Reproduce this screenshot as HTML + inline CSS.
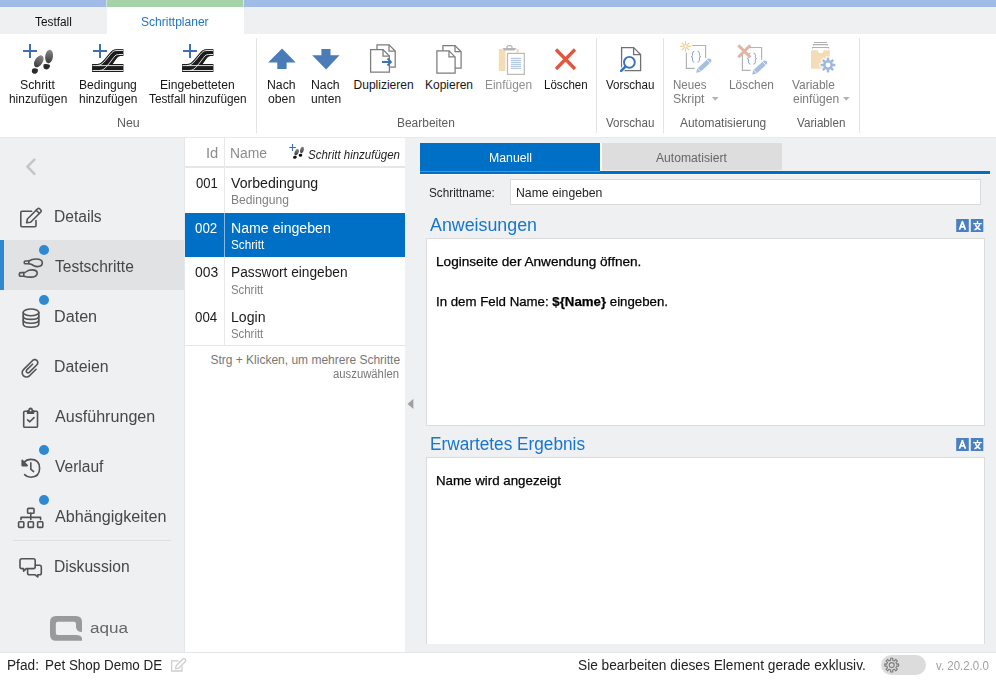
<!DOCTYPE html>
<html><head><meta charset="utf-8"><title>Schrittplaner</title>
<style>
html,body{margin:0;padding:0;width:996px;height:680px;overflow:hidden;background:#fff;}
body{position:relative;font-family:"Liberation Sans", sans-serif;}
.r{position:absolute;}
.t{position:absolute;white-space:nowrap;transform-origin:0 0;font-family:"Liberation Sans", sans-serif;}
svg.i{position:absolute;overflow:visible;}
</style></head><body>
<!-- top tab strip -->
<div class="r" style="left:0;top:0;width:106px;height:7px;background:#9fbbe6"></div>
<div class="r" style="left:106px;top:0;width:1px;height:7px;background:#d2e0e6"></div>
<div class="r" style="left:107px;top:0;width:136px;height:7px;background:#a6d2a8"></div>
<div class="r" style="left:243px;top:0;width:1px;height:7px;background:#d8e6dc"></div>
<div class="r" style="left:244px;top:0;width:752px;height:7px;background:#9fbbe6"></div>
<div class="r" style="left:0;top:7px;width:107px;height:27px;background:#eff0f2"></div>
<div class="r" style="left:244px;top:7px;width:752px;height:27px;background:#eff0f2"></div>
<!-- ribbon separators -->
<div class="r" style="left:256px;top:38px;width:1px;height:95px;background:#e3e3e3"></div>
<div class="r" style="left:596px;top:38px;width:1px;height:95px;background:#e3e3e3"></div>
<div class="r" style="left:663px;top:38px;width:1px;height:95px;background:#e3e3e3"></div>
<div class="r" style="left:859px;top:38px;width:1px;height:95px;background:#e3e3e3"></div>
<div class="r" style="left:0;top:137px;width:996px;height:1px;background:#eaeaea"></div>
<!-- sidebar -->
<div class="r" style="left:0;top:138px;width:185px;height:514px;background:#eff0f2"></div>
<div class="r" style="left:0;top:240px;width:185px;height:50px;background:#e1e2e3"></div>
<div class="r" style="left:0;top:240px;width:4px;height:50px;background:#2f89d2"></div>
<div class="r" style="left:13px;top:540px;width:158px;height:1px;background:#dfe0e2"></div>
<div class="r" style="left:39px;top:245px;width:10px;height:10px;border-radius:50%;background:#2e88d2"></div>
<div class="r" style="left:39px;top:295px;width:10px;height:10px;border-radius:50%;background:#2e88d2"></div>
<div class="r" style="left:39px;top:445px;width:10px;height:10px;border-radius:50%;background:#2e88d2"></div>
<div class="r" style="left:39px;top:495px;width:10px;height:10px;border-radius:50%;background:#2e88d2"></div>
<div class="r" style="left:184px;top:138px;width:1px;height:514px;background:#e6e7e9"></div>
<!-- list panel -->
<div class="r" style="left:185px;top:138px;width:220px;height:514px;background:#ffffff"></div>
<div class="r" style="left:185px;top:166px;width:220px;height:2px;background:#e6e6e6"></div>
<div class="r" style="left:224px;top:138px;width:1px;height:208px;background:#e8e8e8"></div>
<div class="r" style="left:185px;top:213px;width:220px;height:44px;background:#0070c6"></div>
<div class="r" style="left:224px;top:213px;width:1px;height:44px;background:#8ab8e4"></div>
<div class="r" style="left:185px;top:345px;width:220px;height:1px;background:#e6e6e6"></div>
<!-- right panel -->
<div class="r" style="left:405px;top:138px;width:591px;height:514px;background:#eff0f2"></div>
<div class="r" style="left:420px;top:143px;width:180px;height:28px;background:#0070c6"></div>
<div class="r" style="left:602px;top:143px;width:180px;height:27px;background:#dddddd"></div>
<div class="r" style="left:420px;top:171px;width:570px;height:3px;background:#0070c6"></div>
<div class="r" style="left:420px;top:171px;width:180px;height:1px;background:#4a93d6"></div>
<div class="r" style="left:602px;top:170px;width:180px;height:1px;background:#f2efea"></div>
<div class="r" style="left:600px;top:143px;width:2px;height:28px;background:#fbfbfa"></div>
<div class="r" style="left:420px;top:174px;width:570px;height:1px;background:#fbfaf7"></div>
<div class="r" style="left:510px;top:179px;width:469px;height:24px;background:#fff;border:1px solid #dadada"></div>
<div class="r" style="left:426px;top:238px;width:557px;height:186px;background:#fff;border:1px solid #dcdcdc"></div>
<div class="r" style="left:426px;top:457px;width:557px;height:195px;background:#fff;border:1px solid #dcdcdc;border-bottom:none"></div>
<div class="r" style="left:405px;top:644px;width:591px;height:8px;background:#eff0f2"></div>
<!-- footer -->
<div class="r" style="left:0;top:652px;width:996px;height:1px;background:#e6e6e6"></div>
<div class="r" style="left:881px;top:655px;width:45px;height:20px;border-radius:10px;background:#dcdcdc"></div>
<svg class="i" style="left:0;top:0" width="996" height="680" viewBox="0 0 996 680">
<defs>
<filter id="sh" x="-20%" y="-20%" width="140%" height="140%"><feGaussianBlur in="SourceAlpha" stdDeviation="0.7"/><feOffset dy="0.4"/><feComponentTransfer><feFuncA type="linear" slope="0.6"/></feComponentTransfer><feMerge><feMergeNode/><feMergeNode in="SourceGraphic"/></feMerge></filter>
<linearGradient id="gf" x1="0" y1="0" x2="0" y2="1"><stop offset="0" stop-color="#8a8a8a"/><stop offset="1" stop-color="#3a3a3a"/></linearGradient>
</defs>
<!-- Schritt hinzufuegen -->
<g stroke="#3d70b0" stroke-width="2" fill="none"><path d="M23 51H37M30 44V58"/></g>
<g fill="url(#gf)">
<ellipse cx="38.8" cy="61.3" rx="3.9" ry="6.6" transform="rotate(32 38.8 61.3)"/>
<ellipse cx="49.1" cy="56.4" rx="3.9" ry="6.8" transform="rotate(8 49.1 56.4)"/>
</g>
<g fill="#2a2a2a">
<path d="M32 69.5Q34 67.3 37.8 69.2Q38.5 72.5 35.5 73.8Q32 73.8 31.8 71.5Z"/>
<path d="M43.6 64.2Q47 63.5 50 65Q50 68.5 47 69.5Q43.8 69.5 43.4 67Z"/>
</g>
<!-- Bedingung hinzufuegen -->
<g id="trk">
<g stroke="#3d70b0" stroke-width="2" fill="none"><path d="M93 51H107M100 44V58"/></g>
<g filter="url(#sh)">
<path d="M92.1 64.1H97.2C100.3 64.1 102 62.3 104.6 59.2L109.6 53.2C111.8 50.4 113.5 49.2 117 49.2H123.3V56H120.5C118.5 56 117.8 57 116.5 58.5L112.6 63.9H123.3V72H92.1Z" fill="#1c1c1c"/>
</g>
<g stroke="#f4f4f4" stroke-width="0.9" fill="none">
<path d="M92.5 65.6H123M92.5 70.5H123"/>
<path d="M96.5 65.6C100.5 65.6 102.8 63.5 105.3 60.5L110.3 54.5C112.3 52 113.5 50.5 117 50.5H123"/>
<path d="M99.5 70.5C103 70.5 105 68.5 107.5 65.5L112.5 59C114.5 56.5 115.3 54.5 118.5 54.5H123"/>
</g>
</g>
<use href="#trk" x="90" y="0"/>
<!-- Nach oben / unten -->
<path d="M282.1 48.6L295.7 62.6H286.6V68.9H277.3V62.6H268.1Z" fill="#4a7cb8"/>
<path d="M321.4 49H330.5V55.2H339.5L326.1 69.4L312.2 55.2H321.4Z" fill="#4a7cb8"/>
<!-- Duplizieren -->
<g stroke="#7c7c7c" stroke-width="1.25" fill="#fff" stroke-linejoin="miter">
<path d="M377 44.8H389L395.2 51V67H377Z"/><path d="M389 44.8V51H395.2" fill="none"/>
<path d="M370.6 49.6H383L389.4 56V72H370.6Z"/><path d="M383 49.6V56H389.4" fill="none"/>
</g>
<g stroke="#3a74ba" stroke-width="1.8" fill="none"><path d="M382 62H391M387.5 58.5L391 62L387.5 65.5"/></g>
<!-- Kopieren -->
<g stroke="#7c7c7c" stroke-width="1.25" fill="#fff">
<path d="M442.9 45.6H455L461.1 51.7V68.2H442.9Z"/><path d="M455 45.6V51.7H461.1" fill="none"/>
<path d="M436.9 50.8H449L455.1 56.9V73H436.9Z"/><path d="M449 50.8V56.9H455.1" fill="none"/>
</g>
<!-- Einfuegen disabled -->
<path d="M498.8 49H505.5V71H498.8Z" fill="#f4ddb6"/><path d="M516.3 49H518.7V52.6H516.3Z" fill="#f4ddb6"/>
<path d="M502.5 48H516.5L514.5 50.6H504.5Z" fill="#b5b5b5"/>
<path d="M507 48.2V47Q507 45.6 509.5 45.6Q512 45.6 512 47V48.2" fill="none" stroke="#b5b5b5" stroke-width="1.2"/>
<rect x="507.5" y="53.4" width="16.8" height="21" fill="#fff" stroke="#b9b9b9" stroke-width="1.2"/>
<g stroke="#9db7d9" stroke-width="0.9"><path d="M511 58.3H521M511 60.3H521M511 62.3H521M511 64.3H521M511 66.3H521M511 68.3H521"/></g>
<!-- Loeschen -->
<g stroke="#e0563f" stroke-width="3.3" stroke-linecap="butt"><path d="M556 49.5L575 69M575 49.5L556 69"/></g>
<!-- Vorschau -->
<g stroke="#707070" stroke-width="1.3" fill="#fff">
<path d="M621.6 47.6H633.6L640.6 54.6V70.6H621.6Z"/><path d="M633.6 47.6V54.6H640.6" fill="none"/>
</g>
<circle cx="629.4" cy="62.3" r="7.4" fill="#fff"/>
<path d="M625.4 66.6L620.6 71.4" stroke="#fff" stroke-width="4.4" stroke-linecap="round"/>
<circle cx="629.4" cy="62.3" r="5.4" fill="#fff" stroke="#3a73b8" stroke-width="1.9"/>
<path d="M625.4 66.6L621.2 70.8" stroke="#3a73b8" stroke-width="2.6" stroke-linecap="round"/>
<!-- Neues Skript disabled -->
<path d="M692.2 45.5H705.6V57.8M686.4 52.8V68.4H694.7" stroke="#b3b3b3" stroke-width="1.2" fill="none"/><path d="M694.4 51.2Q692.5 51.2 692.5 53.2V55.5Q692.5 56.7 691.1 56.7Q692.5 56.7 692.5 57.900000000000006V60.2Q692.5 62.2 694.4 62.2M697.5000000000001 51.2Q699.4000000000001 51.2 699.4000000000001 53.2V55.5Q699.4000000000001 56.7 700.8000000000001 56.7Q699.4000000000001 56.7 699.4000000000001 57.900000000000006V60.2Q699.4000000000001 62.2 697.5000000000001 62.2" stroke="#8aabd6" stroke-width="1" fill="none"/><path d="M696.10 72.80 L700.30 72.04 L710.67 62.45 L711.20 61.72 L711.41 60.85 L711.27 59.96 L710.80 59.20 L710.07 58.67 L709.20 58.46 L708.31 58.60 L707.55 59.07 L697.18 68.67Z" fill="#a5bfe1"/><path d="M700.95 71.86L697.42 68.04M710.22 63.28L706.69 59.46" stroke="#fff" stroke-width="0.8"/><path d="M687.40 46.40L690.80 46.40M686.84 47.74L689.25 50.15M685.50 48.30L685.50 51.70M684.16 47.74L681.75 50.15M683.60 46.40L680.20 46.40M684.16 45.06L681.75 42.65M685.50 44.50L685.50 41.10M686.84 45.06L689.25 42.65" stroke="#f1cd92" stroke-width="1.1"/><circle cx="685.5" cy="46.4" r="1.7" fill="#fff" stroke="#f1cd92" stroke-width="1"/>
<!-- Loeschen skript disabled -->
<path d="M748.2 47.5H761.6V59.8M742.4 54.8V70.4H750.7" stroke="#b3b3b3" stroke-width="1.2" fill="none"/><path d="M750.4 53.1Q748.5 53.1 748.5 55.1V57.4Q748.5 58.6 747.1 58.6Q748.5 58.6 748.5 59.800000000000004V62.099999999999994Q748.5 64.1 750.4 64.1M753.5000000000001 53.1Q755.4000000000001 53.1 755.4000000000001 55.1V57.4Q755.4000000000001 58.6 756.8000000000001 58.6Q755.4000000000001 58.6 755.4000000000001 59.800000000000004V62.099999999999994Q755.4000000000001 64.1 753.5000000000001 64.1" stroke="#8aabd6" stroke-width="1" fill="none"/><path d="M738.3 45.2L750.3 57.2M750.3 45.2L738.3 57.2" stroke="#e3b4a4" stroke-width="3"/><path d="M752.10 74.50 L756.31 73.76 L766.46 64.45 L766.99 63.73 L767.20 62.85 L767.07 61.97 L766.60 61.20 L765.88 60.67 L765.00 60.46 L764.12 60.59 L763.35 61.06 L753.20 70.37Z" fill="#a5bfe1"/><path d="M756.95 73.58L753.44 69.74M766.00 65.28L762.48 61.45" stroke="#fff" stroke-width="0.8"/>
<!-- Variable einfuegen disabled -->
<g stroke="#b0b0b0" stroke-width="1.1" fill="none"><path d="M814 42.5H827M813.4 45.6V44.6H827.5V45.6M812.6 48.6V47.5H828.6V48.6"/></g>
<path d="M811 50.2H817.8Q818 53.2 820.7 53.2Q823.4 53.2 823.6 50.2H829.8V68.7H811Z" fill="#f4ddb6"/>
<circle cx="828" cy="65" r="6" fill="#fff"/><rect x="-2.25" y="-8.4" width="4.5" height="5" transform="translate(828 65) rotate(0)" fill="#fff"/><rect x="-2.25" y="-8.4" width="4.5" height="5" transform="translate(828 65) rotate(45)" fill="#fff"/><rect x="-2.25" y="-8.4" width="4.5" height="5" transform="translate(828 65) rotate(90)" fill="#fff"/><rect x="-2.25" y="-8.4" width="4.5" height="5" transform="translate(828 65) rotate(135)" fill="#fff"/><rect x="-2.25" y="-8.4" width="4.5" height="5" transform="translate(828 65) rotate(180)" fill="#fff"/><rect x="-2.25" y="-8.4" width="4.5" height="5" transform="translate(828 65) rotate(225)" fill="#fff"/><rect x="-2.25" y="-8.4" width="4.5" height="5" transform="translate(828 65) rotate(270)" fill="#fff"/><rect x="-2.25" y="-8.4" width="4.5" height="5" transform="translate(828 65) rotate(315)" fill="#fff"/>
<circle cx="828" cy="65" r="4.9" fill="#9fb9dc"/><rect x="-1.25" y="-7.4" width="2.5" height="3.6" transform="translate(828 65) rotate(0)" fill="#9fb9dc"/><rect x="-1.25" y="-7.4" width="2.5" height="3.6" transform="translate(828 65) rotate(45)" fill="#9fb9dc"/><rect x="-1.25" y="-7.4" width="2.5" height="3.6" transform="translate(828 65) rotate(90)" fill="#9fb9dc"/><rect x="-1.25" y="-7.4" width="2.5" height="3.6" transform="translate(828 65) rotate(135)" fill="#9fb9dc"/><rect x="-1.25" y="-7.4" width="2.5" height="3.6" transform="translate(828 65) rotate(180)" fill="#9fb9dc"/><rect x="-1.25" y="-7.4" width="2.5" height="3.6" transform="translate(828 65) rotate(225)" fill="#9fb9dc"/><rect x="-1.25" y="-7.4" width="2.5" height="3.6" transform="translate(828 65) rotate(270)" fill="#9fb9dc"/><rect x="-1.25" y="-7.4" width="2.5" height="3.6" transform="translate(828 65) rotate(315)" fill="#9fb9dc"/>
<circle cx="828" cy="65" r="2.4" fill="#fff"/>
<!-- list header icon -->
<g stroke="#3d70b0" stroke-width="1.1" fill="none"><path d="M289.2 147.5H295.9M292.5 144.1V150.9"/></g>
<g fill="url(#gf)">
<ellipse cx="296.7" cy="152.2" rx="1.9" ry="3.3" transform="rotate(25 296.7 152.2)"/>
<ellipse cx="302" cy="149.9" rx="1.8" ry="3.3" transform="rotate(12 302 149.9)"/>
</g>
<g fill="#111">
<ellipse cx="294.9" cy="157.3" rx="1.9" ry="1.5" transform="rotate(-15 294.9 157.3)"/>
<ellipse cx="300.5" cy="155.3" rx="1.8" ry="1.5" transform="rotate(-10 300.5 155.3)"/>
</g>
<!-- splitter arrow -->
<path d="M413.4 398.8V409.1L407.5 403.95Z" fill="#a0a0a0"/>
<!-- translate icons -->
<g id="tr">
<rect x="956.2" y="219" width="12.6" height="13" fill="#4a7fc0"/>
<rect x="970.8" y="219" width="12.5" height="13" fill="#4a7fc0"/>
<path d="M959.4 229.8L962.4 221.6L965.4 229.8M960.5 226.8H964.3" stroke="#fff" stroke-width="1.7" fill="none" stroke-linejoin="round"/>
<path d="M973.2 223.6H981.8M977.5 221V223.4M975.3 224.4Q977 228.6 980.6 229.8M979.7 224.4Q978 228.6 974.4 229.8" stroke="#fff" stroke-width="1.35" fill="none"/>
</g>
<use href="#tr" x="0" y="219"/>
<!-- dropdown arrows -->
<path d="M711.8 97H718.6L715.2 100.8Z" fill="#b3b3b3"/>
<path d="M843 97.1H849.6L846.3 100.7Z" fill="#b3b3b3"/>
<!-- sidebar chevron -->
<path d="M34.4 159.6L27.4 166.6L34.4 173.8" stroke="#c6c6c6" stroke-width="2.6" stroke-linecap="round" stroke-linejoin="round" fill="none"/>
<!-- sidebar icons -->
<g stroke="#535353" stroke-width="1.6" fill="none" stroke-linecap="round" stroke-linejoin="round">
<!-- details -->
<path d="M31.6 211.2H22Q20.8 211.2 20.8 212.4V225.6Q20.8 226.8 22 226.8H34.8Q36 226.8 36 225.6V220.5"/>
<path d="M26.6 222.8L27.4 219L37.6 208.8Q38.6 207.8 39.6 208.8L40.8 210Q41.8 211 40.8 212L30.6 222.2Z"/>
<path d="M36.2 210.2L39.4 213.4"/>
<!-- testschritte -->
<path d="M28.8 261H25.6Q24.2 261 24.2 262.4Q24.2 263.8 25.6 263.8H28.8Q31.5 264 33.5 265.5Q35.5 266.6 37.5 266.6Q42.3 266.6 42.3 262.8Q42.3 259 36 259Q32 259 28.8 261Z"/>
<path d="M28.8 261V263.8"/>
<path d="M23.8 272.6H20.9Q19.3 272.6 19.3 274.4Q19.3 276.2 20.9 276.2H23.8Q27 277.1 30.5 277.1Q37.2 277.1 37.2 273.2Q37.2 269.9 32 269.9Q28.5 269.9 26.5 271.5Q25.3 272.6 23.8 272.6Z"/>
<path d="M23.8 272.6V276.2"/>
<!-- daten -->
<ellipse cx="31" cy="312.4" rx="7.8" ry="3.4"/>
<path d="M23.2 312.4V324Q23.2 327.3 31 327.3Q38.8 327.3 38.8 324V312.4"/>
<path d="M23.2 316.2Q23.2 319.4 31 319.4Q38.8 319.4 38.8 316.2"/>
<path d="M23.2 320Q23.2 323.2 31 323.2Q38.8 323.2 38.8 320"/>
<!-- dateien -->
<path d="M36.06 369.25 L29.57 375.74 L29.57 375.74 L28.48 376.53 L27.19 376.95 L25.84 376.95 L24.56 376.53 L23.46 375.74 L22.67 374.64 L22.25 373.36 L22.25 372.01 L22.67 370.72 L23.46 369.63 L23.46 369.63 L32.63 360.46 L32.63 360.46 L33.39 359.91 L34.29 359.61 L35.24 359.61 L36.14 359.91 L36.90 360.46 L37.46 361.23 L37.75 362.13 L37.75 363.07 L37.46 363.97 L36.90 364.74 L36.90 364.74 L29.27 372.38 L29.27 372.38 L28.83 372.69 L28.32 372.86 L27.78 372.86 L27.26 372.69 L26.82 372.38 L26.51 371.94 L26.34 371.42 L26.34 370.88 L26.51 370.37 L26.82 369.93 L26.82 369.93 L32.55 364.21"/>
<!-- ausfuehrungen -->
<path d="M27 411.2H24.8Q23.7 411.2 23.7 412.3V426.2Q23.7 427.3 24.8 427.3H36.4Q37.5 427.3 37.5 426.2V412.3Q37.5 411.2 36.4 411.2H34.2"/>
<path d="M27.6 413.2V410.8H29Q29 408.3 30.6 408.3Q32.2 408.3 32.2 410.8H33.6V413.2Z" fill="#535353"/>
<circle cx="30.6" cy="410.4" r="0.85" fill="#eff0f2" stroke="none"/>
<path d="M27.6 419.8L29.8 421.8L34 417.6"/>
<!-- verlauf -->
<path d="M24.6 474.6Q27 477.2 30.8 477.2Q39.6 477.2 39.6 468.3Q39.6 459.4 30.8 459.4Q26.6 459.4 23.8 462.6"/>
<path d="M22.2 460.4V465.6H27.2Z" fill="#535353"/>
<path d="M30.8 462.8V469.2L33.6 471.6"/>
<!-- abhaengigkeiten -->
<rect x="27.6" y="508.4" width="6.4" height="4.8" rx="0.8"/>
<path d="M30.8 513.4V519.4M21 519.6V517.4H40.6V519.6"/>
<rect x="18.6" y="521.8" width="5.2" height="5.6" rx="0.8"/>
<rect x="28.2" y="521.8" width="5.2" height="5.6" rx="0.8"/>
<rect x="37.6" y="521.8" width="5.2" height="5.6" rx="0.8"/>
<!-- diskussion -->
<path d="M21.8 558.8H33.4Q35.2 558.8 35.2 560.6V566.8Q35.2 568.6 33.4 568.6H26.2L23.6 571.2V568.6H21.8Q20 568.6 20 566.8V560.6Q20 558.8 21.8 558.8Z"/>
<path d="M35.4 565.2H39.6Q41.3 565.2 41.3 567V573Q41.3 574.8 39.6 574.8H37.8V577L35.2 574.8H29.4Q27.6 574.8 27.6 573V568.8"/>
</g>
<!-- aqua logo -->
<path d="M50 622Q50 616 56 616H76Q82 616 82 622V632Q77 632 76 627.5V624Q76 621.8 74 621.8H57.8Q55.8 621.8 55.8 623.8V632.8Q55.8 635 57.8 635H76Q81 635 82 638.2V640.7H56Q50 640.7 50 634.7Z" fill="#9a9a9a"/>
<!-- footer edit icon -->
<g stroke="#cdcdcd" stroke-width="1.3" fill="none" stroke-linejoin="round">
<path d="M178.6 660.8H171.6V671H182V666.4"/>
<path d="M175.60 668.80 L178.71 668.23 L185.20 661.75 L185.67 660.94 L185.67 660.01 L185.20 659.20 L184.39 658.73 L183.46 658.73 L182.65 659.20 L176.17 665.69Z"/>
</g>
<!-- toggle gear -->
<g transform="translate(891.7 665.1)" stroke="#7a7a7a" stroke-width="1.1" fill="none" stroke-linejoin="round">
<path d="M-1.18 -6.90 L1.18 -6.90 L0.96 -4.91 L2.79 -4.15 L4.04 -5.72 L5.72 -4.04 L4.15 -2.79 L4.91 -0.96 L6.90 -1.18 L6.90 1.18 L4.91 0.96 L4.15 2.79 L5.72 4.04 L4.04 5.72 L2.79 4.15 L0.96 4.91 L1.18 6.90 L-1.18 6.90 L-0.96 4.91 L-2.79 4.15 L-4.04 5.72 L-5.72 4.04 L-4.15 2.79 L-4.91 0.96 L-6.90 1.18 L-6.90 -1.18 L-4.91 -0.96 L-4.15 -2.79 L-5.72 -4.04 L-4.04 -5.72 L-2.79 -4.15 L-0.96 -4.91Z"/>
<circle r="2.5"/>
</g>
</svg>

<div class="t" id="t0" style="left:34.80px;top:16.00px;font-size:12px;line-height:12px;color:#111111;transform:scaleX(0.9853);">Testfall</div>
<div class="t" id="t1" style="left:140.98px;top:16.00px;font-size:12px;line-height:12px;color:#1f74c8;transform:scaleX(1.0038);">Schrittplaner</div>
<div class="t" id="t2" style="left:20.37px;top:79.00px;font-size:12px;line-height:12px;color:#161616;transform:scaleX(1.0241);">Schritt</div>
<div class="t" id="t3" style="left:9.16px;top:93.00px;font-size:12px;line-height:12px;color:#161616;transform:scaleX(0.9920);">hinzufügen</div>
<div class="t" id="t4" style="left:78.57px;top:79.00px;font-size:12px;line-height:12px;color:#161616;transform:scaleX(1.0081);">Bedingung</div>
<div class="t" id="t5" style="left:78.58px;top:93.00px;font-size:12px;line-height:12px;color:#161616;transform:scaleX(0.9956);">hinzufügen</div>
<div class="t" id="t6" style="left:160.38px;top:79.00px;font-size:12px;line-height:12px;color:#161616;transform:scaleX(1.0076);">Eingebetteten</div>
<div class="t" id="t7" style="left:149.20px;top:93.00px;font-size:12px;line-height:12px;color:#161616;transform:scaleX(0.9819);">Testfall hinzufügen</div>
<div class="t" id="t8" style="left:116.86px;top:117.00px;font-size:12px;line-height:12px;color:#5c5c5c;transform:scaleX(1.0343);">Neu</div>
<div class="t" id="t9" style="left:267.17px;top:79.00px;font-size:12px;line-height:12px;color:#161616;transform:scaleX(1.0235);">Nach</div>
<div class="t" id="t10" style="left:268.39px;top:93.00px;font-size:12px;line-height:12px;color:#161616;transform:scaleX(1.0192);">oben</div>
<div class="t" id="t11" style="left:310.78px;top:79.00px;font-size:12px;line-height:12px;color:#161616;transform:scaleX(1.0235);">Nach</div>
<div class="t" id="t12" style="left:311.13px;top:93.00px;font-size:12px;line-height:12px;color:#161616;transform:scaleX(1.0020);">unten</div>
<div class="t" id="t13" style="left:353.58px;top:79.00px;font-size:12px;line-height:12px;color:#161616;">Duplizieren</div>
<div class="t" id="t14" style="left:425.00px;top:79.00px;font-size:12px;line-height:12px;color:#161616;">Kopieren</div>
<div class="t" id="t15" style="left:484.95px;top:79.00px;font-size:12px;line-height:12px;color:#8f8f8f;transform:scaleX(0.9940);">Einfügen</div>
<div class="t" id="t16" style="left:543.58px;top:79.00px;font-size:12px;line-height:12px;color:#161616;transform:scaleX(0.9627);">Löschen</div>
<div class="t" id="t17" style="left:397.18px;top:117.00px;font-size:12px;line-height:12px;color:#5c5c5c;transform:scaleX(0.9964);">Bearbeiten</div>
<div class="t" id="t18" style="left:606.20px;top:79.00px;font-size:12px;line-height:12px;color:#161616;transform:scaleX(0.9671);">Vorschau</div>
<div class="t" id="t19" style="left:606.20px;top:117.00px;font-size:12px;line-height:12px;color:#5c5c5c;transform:scaleX(0.9671);">Vorschau</div>
<div class="t" id="t20" style="left:672.75px;top:79.00px;font-size:12px;line-height:12px;color:#7a7a7a;transform:scaleX(0.9642);">Neues</div>
<div class="t" id="t21" style="left:672.75px;top:93.00px;font-size:12px;line-height:12px;color:#7a7a7a;transform:scaleX(1.0249);">Skript</div>
<div class="t" id="t22" style="left:729.18px;top:79.00px;font-size:12px;line-height:12px;color:#7a7a7a;transform:scaleX(0.9895);">Löschen</div>
<div class="t" id="t23" style="left:680.40px;top:117.00px;font-size:12px;line-height:12px;color:#5c5c5c;transform:scaleX(0.9941);">Automatisierung</div>
<div class="t" id="t24" style="left:792.00px;top:79.00px;font-size:12px;line-height:12px;color:#7a7a7a;transform:scaleX(0.9922);">Variable</div>
<div class="t" id="t25" style="left:792.99px;top:93.00px;font-size:12px;line-height:12px;color:#7a7a7a;transform:scaleX(1.0035);">einfügen</div>
<div class="t" id="t26" style="left:796.98px;top:117.00px;font-size:12px;line-height:12px;color:#5c5c5c;transform:scaleX(0.9722);">Variablen</div>
<div class="t" id="t27" style="left:54.16px;top:209.00px;font-size:16px;line-height:16px;color:#474747;transform:scaleX(0.9742);">Details</div>
<div class="t" id="t28" style="left:55.20px;top:259.00px;font-size:16px;line-height:16px;color:#474747;transform:scaleX(0.9740);">Testschritte</div>
<div class="t" id="t29" style="left:54.14px;top:309.00px;font-size:16px;line-height:16px;color:#474747;transform:scaleX(1.0094);">Daten</div>
<div class="t" id="t30" style="left:54.16px;top:359.00px;font-size:16px;line-height:16px;color:#474747;transform:scaleX(0.9906);">Dateien</div>
<div class="t" id="t31" style="left:55.20px;top:409.00px;font-size:16px;line-height:16px;color:#474747;transform:scaleX(1.0060);">Ausführungen</div>
<div class="t" id="t32" style="left:55.19px;top:459.00px;font-size:16px;line-height:16px;color:#474747;transform:scaleX(0.9718);">Verlauf</div>
<div class="t" id="t33" style="left:55.20px;top:509.00px;font-size:16px;line-height:16px;color:#474747;transform:scaleX(1.0099);">Abhängigkeiten</div>
<div class="t" id="t34" style="left:54.17px;top:559.00px;font-size:16px;line-height:16px;color:#474747;transform:scaleX(0.9779);">Diskussion</div>
<div class="t" id="t35" style="left:89.96px;top:620.00px;font-size:15.5px;line-height:15.5px;color:#666666;transform:scaleX(1.1031);">aqua</div>
<div class="t" id="t36" style="left:205.60px;top:146.00px;font-size:14px;line-height:14px;color:#8c8c8c;transform:scaleX(1.0505);">Id</div>
<div class="t" id="t37" style="left:230.34px;top:146.00px;font-size:14px;line-height:14px;color:#8c8c8c;transform:scaleX(0.9923);">Name</div>
<div class="t" id="t38" style="left:308.00px;top:149.00px;font-size:12.5px;line-height:12.5px;color:#1f1f1f;transform:scaleX(0.9195);font-style:italic">Schritt hinzufügen</div>
<div class="t" id="t39" style="left:195.80px;top:176.00px;font-size:14px;line-height:14px;color:#1a1a1a;transform:scaleX(0.9337);">001</div>
<div class="t" id="t40" style="left:231.00px;top:176.00px;font-size:14px;line-height:14px;color:#1a1a1a;transform:scaleX(1.0091);">Vorbedingung</div>
<div class="t" id="t41" style="left:230.95px;top:194.00px;font-size:12px;line-height:12px;color:#808080;transform:scaleX(1.0084);">Bedingung</div>
<div class="t" id="t42" style="left:195.39px;top:221.00px;font-size:14px;line-height:14px;color:#ffffff;transform:scaleX(0.9510);">002</div>
<div class="t" id="t43" style="left:230.97px;top:221.00px;font-size:14px;line-height:14px;color:#ffffff;transform:scaleX(1.0099);">Name eingeben</div>
<div class="t" id="t44" style="left:230.97px;top:239.00px;font-size:12px;line-height:12px;color:#ffffff;transform:scaleX(0.9765);">Schritt</div>
<div class="t" id="t45" style="left:195.41px;top:265.00px;font-size:14px;line-height:14px;color:#1a1a1a;transform:scaleX(0.9942);">003</div>
<div class="t" id="t46" style="left:230.98px;top:265.00px;font-size:14px;line-height:14px;color:#1a1a1a;transform:scaleX(0.9794);">Passwort eingeben</div>
<div class="t" id="t47" style="left:230.96px;top:283.50px;font-size:12px;line-height:12px;color:#808080;transform:scaleX(0.9487);">Schritt</div>
<div class="t" id="t48" style="left:195.39px;top:310.00px;font-size:14px;line-height:14px;color:#1a1a1a;transform:scaleX(0.9510);">004</div>
<div class="t" id="t49" style="left:230.93px;top:310.00px;font-size:14px;line-height:14px;color:#1a1a1a;transform:scaleX(1.0072);">Login</div>
<div class="t" id="t50" style="left:230.96px;top:328.00px;font-size:12px;line-height:12px;color:#808080;transform:scaleX(0.9487);">Schritt</div>
<div class="t" id="t51" style="left:210.39px;top:354.00px;font-size:12px;line-height:12px;color:#777777;">Strg + Klicken, um mehrere Schritte</div>
<div class="t" id="t52" style="left:333.00px;top:368.00px;font-size:12px;line-height:12px;color:#777777;transform:scaleX(0.9421);">auszuwählen</div>
<div class="t" id="t53" style="left:488.94px;top:152.00px;font-size:12.5px;line-height:12.5px;color:#ffffff;transform:scaleX(0.9836);">Manuell</div>
<div class="t" id="t54" style="left:655.80px;top:152.00px;font-size:12.5px;line-height:12.5px;color:#666666;transform:scaleX(0.9706);">Automatisiert</div>
<div class="t" id="t55" style="left:429.19px;top:187.00px;font-size:12px;line-height:12px;color:#1f1f1f;transform:scaleX(0.9778);">Schrittname:</div>
<div class="t" id="t56" style="left:515.59px;top:187.00px;font-size:12.5px;line-height:12.5px;color:#1f1f1f;transform:scaleX(0.9791);">Name eingeben</div>
<div class="t" id="t57" style="left:430.20px;top:217.00px;font-size:17.5px;line-height:17.5px;color:#1676cf;transform:scaleX(1.0184);">Anweisungen</div>
<div class="t" id="t58" style="left:435.99px;top:255.00px;font-size:13px;line-height:13px;color:#000000;transform:scaleX(1.0460);-webkit-text-stroke:0.25px #000">Loginseite der Anwendung öffnen.</div>
<div class="t" id="t59" style="left:435.99px;top:295.00px;font-size:13px;line-height:13px;color:#000000;transform:scaleX(1.0191);-webkit-text-stroke:0.25px #000">In dem Feld Name: <b>${Name}</b> eingeben.</div>
<div class="t" id="t60" style="left:430.19px;top:436.00px;font-size:17.5px;line-height:17.5px;color:#1676cf;transform:scaleX(0.9837);">Erwartetes Ergebnis</div>
<div class="t" id="t61" style="left:435.99px;top:474.00px;font-size:13px;line-height:13px;color:#000000;transform:scaleX(1.0236);-webkit-text-stroke:0.25px #000">Name wird angezeigt</div>
<div class="t" id="t62" style="left:6.91px;top:658.00px;font-size:14px;line-height:14px;color:#222222;transform:scaleX(0.9768);">Pfad:</div>
<div class="t" id="t63" style="left:44.99px;top:658.00px;font-size:14px;line-height:14px;color:#222222;transform:scaleX(0.9594);">Pet Shop Demo DE</div>
<div class="t" id="t64" style="left:578.19px;top:658.00px;font-size:14px;line-height:14px;color:#222222;transform:scaleX(0.9792);">Sie bearbeiten dieses Element gerade exklusiv.</div>
<div class="t" id="t65" style="left:936.20px;top:660.00px;font-size:12.5px;line-height:12.5px;color:#a0a0a0;transform:scaleX(0.9191);">v. 20.2.0.0</div>
</body></html>
